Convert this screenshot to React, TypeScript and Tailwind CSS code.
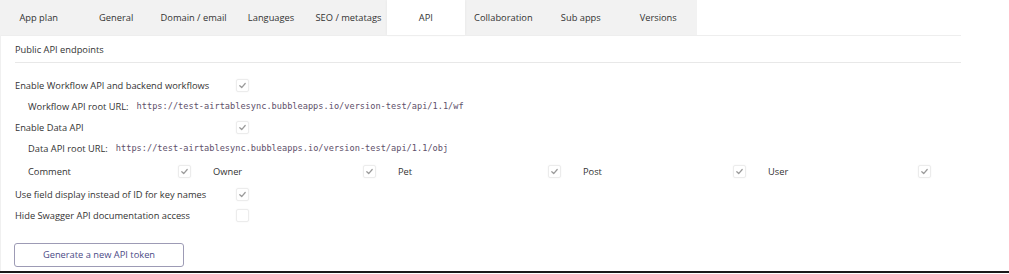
import React from "react";

const tabs = ["App plan", "General", "Domain / email", "Languages", "SEO / metatags", "API", "Collaboration", "Sub apps", "Versions"];

function Check({ checked = true }: { checked?: boolean }) {
  return (
    <div className="w-[13px] h-[13px] rounded-[2px] border border-[#ececec] bg-white flex items-center justify-center shadow-[0_0_2px_rgba(0,0,0,0.05)]">
      {checked && (
        <svg width="9" height="9" viewBox="0 0 10 10">
          <path d="M2 5.3 L4.1 7.3 L8 2.8" fill="none" stroke="#9a9a9a" strokeWidth="1.4" strokeLinecap="round" strokeLinejoin="round" />
        </svg>
      )}
    </div>
  );
}

function Row({ label, checked = true }: { label: string; checked?: boolean }) {
  return (
    <div className="flex items-center h-[21px] pl-[14px] whitespace-nowrap">
      <span className="w-[221px]">{label}</span>
      <Check checked={checked} />
    </div>
  );
}

function UrlRow({ label, url }: { label: string; url: string }) {
  return (
    <div className="flex items-center h-[21px] pl-[27px] whitespace-nowrap">
      <span>{label}</span>
      <span className="ml-[8px] text-[8.65px] text-[#5e4f6a]" style={{ fontFamily: "'DejaVu Sans Mono', 'Liberation Mono', monospace" }}>
        {url}
      </span>
    </div>
  );
}

export default function App() {
  const types = ["Comment", "Owner", "Pet", "Post", "User"];
  return (
    <div className="w-[1009px] h-[274px] bg-white text-[9.3px] text-[#333333] overflow-hidden flex flex-col" style={{ fontFamily: "'Open Sans', 'Noto Sans', sans-serif" }}>
      <div className="flex h-[35px] shrink-0">
        <div className="flex w-[697px] bg-[#f2f2f2]">
          {tabs.map((t) => (
            <div
              key={t}
              className={
                "flex-1 flex items-center justify-center whitespace-nowrap pt-[1px] " +
                (t === "API" ? "bg-white shadow-[0_0_3px_rgba(0,0,0,0.06)]" : "")
              }
            >
              {t}
            </div>
          ))}
        </div>
      </div>
      <div className="flex-1 flex flex-col border-l border-[#f0f0f0]">
        <div className="w-[960px] border-t border-[#eeeeee]" />
        <div className="h-[26px] flex items-center pl-[14px] pt-[2px]">Public API endpoints</div>
        <div className="ml-[14px] w-[946px] border-t border-[#e8e8e8]" />
        <div className="h-[12px]" />
        <Row label="Enable Workflow API and backend workflows" />
        <UrlRow label="Workflow API root URL:" url="https://test-airtablesync.bubbleapps.io/version-test/api/1.1/wf" />
        <Row label="Enable Data API" />
        <UrlRow label="Data API root URL:" url="https://test-airtablesync.bubbleapps.io/version-test/api/1.1/obj" />
        <div className="flex items-center h-[25px] pl-[27px]">
          {types.map((t) => (
            <div key={t} className="w-[185px] flex items-center">
              <span className="w-[150px]">{t}</span>
              <Check />
            </div>
          ))}
        </div>
        <Row label="Use field display instead of ID for key names" />
        <Row label="Hide Swagger API documentation access" checked={false} />
        <div className="pl-[13px] pt-[17px]">
          <button className="w-[170px] h-[24px] rounded-[3px] border border-[#9d9bb5] text-[#4b4a86] bg-white text-[9.3px] flex items-center justify-center">
            Generate a new API token
          </button>
        </div>
      </div>
      <div className="h-[2px] bg-[#1a1a1a] mb-[1px] shrink-0" />
    </div>
  );
}
